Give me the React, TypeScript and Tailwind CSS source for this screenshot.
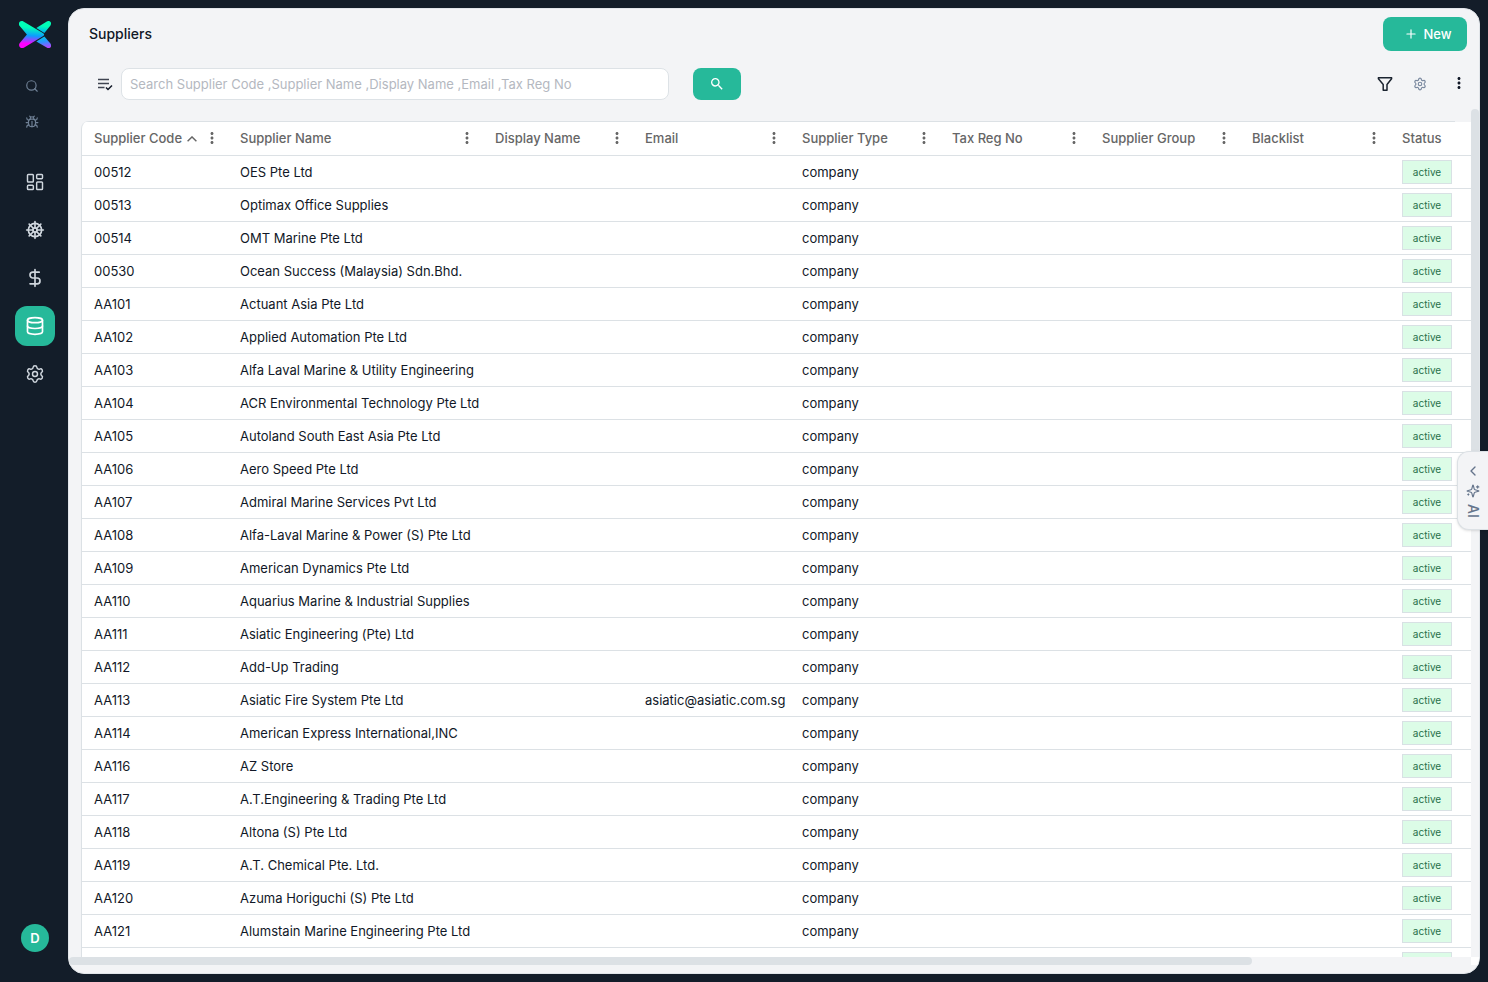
import type { ReactNode } from "react";
import {
  Bug,
  ChevronLeft,
  Database,
  DollarSign,
  LayoutDashboard,
  Plus,
  Search,
  Settings,
  ShipWheel,
} from "lucide-react";
import { MdMoreVert, MdSearch } from "react-icons/md";

const columns = [
  { label: "Supplier Code", width: "w-[146px]", sorted: true },
  { label: "Supplier Name", width: "w-[255px]" },
  { label: "Display Name", width: "w-[150px]" },
  { label: "Email", width: "w-[157px]" },
  { label: "Supplier Type", width: "w-[150px]" },
  { label: "Tax Reg No", width: "w-[150px]" },
  { label: "Supplier Group", width: "w-[150px]" },
  { label: "Blacklist", width: "w-[150px]" },
];

const suppliers: [string, string, string?][] = [
  ["00512", "OES Pte Ltd"],
  ["00513", "Optimax Office Supplies"],
  ["00514", "OMT Marine Pte Ltd"],
  ["00530", "Ocean Success (Malaysia) Sdn.Bhd."],
  ["AA101", "Actuant Asia Pte Ltd"],
  ["AA102", "Applied Automation Pte Ltd"],
  ["AA103", "Alfa Laval Marine & Utility Engineering"],
  ["AA104", "ACR Environmental Technology Pte Ltd"],
  ["AA105", "Autoland South East Asia Pte Ltd"],
  ["AA106", "Aero Speed Pte Ltd"],
  ["AA107", "Admiral Marine Services Pvt Ltd"],
  ["AA108", "Alfa-Laval Marine & Power (S) Pte Ltd"],
  ["AA109", "American Dynamics Pte Ltd"],
  ["AA110", "Aquarius Marine & Industrial Supplies"],
  ["AA111", "Asiatic Engineering (Pte) Ltd"],
  ["AA112", "Add-Up Trading"],
  ["AA113", "Asiatic Fire System Pte Ltd", "asiatic@asiatic.com.sg"],
  ["AA114", "American Express International,INC"],
  ["AA116", "AZ Store"],
  ["AA117", "A.T.Engineering & Trading Pte Ltd"],
  ["AA118", "Altona (S) Pte Ltd"],
  ["AA119", "A.T. Chemical Pte. Ltd."],
  ["AA120", "Azuma Horiguchi (S) Pte Ltd"],
  ["AA121", "Alumstain Marine Engineering Pte Ltd"],
];

function Logo() {
  return (
    <svg className="h-7 w-8" viewBox="0 0 32 28" aria-hidden="true">
      <defs>
        <linearGradient id="wing" x1="15" y1="0" x2="13" y2="27" gradientUnits="userSpaceOnUse">
          <stop offset="0.25" stopColor="#00ffb7" />
          <stop offset="0.55" stopColor="#0c9cff" />
          <stop offset="0.85" stopColor="#ff00ff" />
        </linearGradient>
        <linearGradient id="upper" x1="24" y1="0" x2="22" y2="12" gradientUnits="userSpaceOnUse">
          <stop offset="0.4" stopColor="#00ffb7" />
          <stop offset="1" stopColor="#00a8f8" />
        </linearGradient>
        <linearGradient id="lower" x1="23" y1="14" x2="26" y2="28" gradientUnits="userSpaceOnUse">
          <stop offset="0.15" stopColor="#00c4ea" />
          <stop offset="0.5" stopColor="#2e92ff" />
          <stop offset="1" stopColor="#c63cff" />
        </linearGradient>
      </defs>
      <path fill="url(#wing)" d="M4.400.5 23.800 12.100c1.800 1.100 1.800 2.100 0 3.200L4.800 26.700C1.500 28.200-1.300 24.500.8 21.900L7.900 13.600.7 5C-1.500 2.200 1.200-1.100 4.400.5Z" />
      <path fill="url(#upper)" d="M17.300 7 27.800.4c3.200-1.600 5.500 1.500 3.500 4.300l-5.900 7.400Z" />
      <path fill="url(#lower)" d="m17.300 20.400 8.100-4.900 6 6.900c2.200 2.900-.7 5.900-3.700 4.200Z" />
    </svg>
  );
}

function NavItem({ children, active }: { children: ReactNode; active?: boolean }) {
  return (
    <a
      className={
        active
          ? "flex size-10 items-center justify-center rounded-xl bg-[#26b99a] text-white"
          : "flex size-10 items-center justify-center text-[#d0d7de]"
      }
    >
      {children}
    </a>
  );
}

function Sidebar() {
  return (
    <nav className="flex h-full w-[68px] shrink-0 flex-col items-center pt-[21px] pr-px pb-[30px] pl-[3px]">
      <Logo />
      <div className="mt-[30px] mr-[6px] flex flex-col gap-[22px] text-[#6f8095]">
        <Search size={14} />
        <Bug size={14} />
      </div>
      <div className="mt-[33px] flex flex-col gap-2">
        <NavItem><LayoutDashboard size={20} strokeWidth={1.75} /></NavItem>
        <NavItem><ShipWheel size={20} strokeWidth={2} /></NavItem>
        <NavItem><DollarSign size={20} strokeWidth={2} /></NavItem>
        <NavItem active><Database size={20} strokeWidth={2} /></NavItem>
        <NavItem><Settings size={20} strokeWidth={1.75} /></NavItem>
      </div>
      <div className="mt-auto flex size-7 items-center justify-center rounded-full bg-[#26b99a] pt-px text-[13px] font-semibold text-white">
        D
      </div>
    </nav>
  );
}

function Toolbar() {
  return (
    <div className="flex h-8 shrink-0 items-center pl-7">
      <svg className="h-[14px] w-4 shrink-0" viewBox="0 0 16 14" fill="none" stroke="#3f4451" strokeWidth="1.7">
        <path d="M1 2.500h11M1 6.500h11M1 10.500h6.500" />
        <path d="m9 10.500 2 2 4-4" strokeWidth="1.500" stroke="#111827" />
      </svg>
      <div className="ml-2 flex h-8 w-[548px] items-center rounded-lg border border-[#dde2e6] bg-white px-2 pt-px text-[13px] text-[#b4b8bf]">
        Search Supplier Code ,Supplier Name ,Display Name ,Email ,Tax Reg No
      </div>
      <button className="ml-6 flex h-8 w-12 items-center justify-center rounded-lg bg-[#26b99a] text-white">
        <MdSearch size={16} />
      </button>
      <div className="ml-auto flex items-center pr-[11px]">
        <svg className="size-4" viewBox="0 0 16 16" fill="none" stroke="#1b2430" strokeWidth="1.500" strokeLinejoin="round">
          <path d="M1.400 1.800h13.200v1L10 8.500v5.700H6.200V8.500L1.400 2.800Z" />
        </svg>
        <Settings size={14} className="ml-5 text-[#7b8aa0]" />
        <MdMoreVert size={18} className="mb-[2px] ml-[23px] text-[#111827]" />
      </div>
    </div>
  );
}

function StatusTag({ label }: { label?: string }) {
  return (
    <span className="flex h-6 w-[50px] items-center justify-center border border-[#d8e1e4] bg-[#dcfce7] text-[10px] text-[#27704a]">
      {label}
    </span>
  );
}

function SupplierTable() {
  return (
    <div className="h-[836px] w-[1390px] overflow-hidden rounded-tl-lg border-l border-[#dce1e5] bg-white text-[13px]">
      <div className="h-px w-full bg-[#f3f4f6]">
        <div className="h-px w-[1373px] bg-[#dce1e5]" />
      </div>
      <div className="flex h-[34px] items-center border-b border-[#dce1e5] font-medium text-[#666666]">
        {columns.map((c) => (
          <div key={c.label} className={`${c.width} flex shrink-0 items-center pr-[7px] pl-3`}>
            <span className="pt-px whitespace-nowrap">{c.label}</span>
            {c.sorted && (
              <svg className="ml-[5px] h-[6px] w-[10px] shrink-0" viewBox="0 0 10 6" fill="none" stroke="currentColor" strokeWidth="1.400">
                <path d="M.6 5.300 5 .9l4.400 4.400" />
              </svg>
            )}
            <MdMoreVert size={18} className="mb-px ml-auto shrink-0" />
          </div>
        ))}
        <div className="pt-px pl-3">Status</div>
      </div>
      {suppliers.map(([code, name, email]) => (
        <div key={code} className="flex h-[33px] items-center border-b border-[#dce1e5] leading-5 whitespace-nowrap text-[#111827]">
          <div className="w-[146px] shrink-0 pl-3">{code}</div>
          <div className="w-[255px] shrink-0 pl-3">{name}</div>
          <div className="w-[150px] shrink-0" />
          <div className="w-[157px] shrink-0 pl-3">{email}</div>
          <div className="w-[600px] shrink-0 pl-3">company</div>
          <div className="pl-3"><StatusTag label="active" /></div>
        </div>
      ))}
      <div className="pt-1 pl-[1320px]"><StatusTag /></div>
    </div>
  );
}

export default function App() {
  return (
    <div className="relative flex h-[982px] w-[1488px] overflow-hidden bg-[#131d29] font-['Inter',sans-serif]">
      <Sidebar />
      <main className="mt-2 flex h-[966px] w-[1412px] flex-col overflow-hidden rounded-2xl border border-[#e1e5e9] bg-[#f3f4f6]">
        <header className="flex h-[50px] shrink-0 items-center justify-between pr-3 pl-5">
          <h1 className="pb-px text-[14px] font-medium text-[#111827]">Suppliers</h1>
          <button className="flex h-[34px] w-[84px] items-center justify-center gap-[5px] rounded-lg bg-[#26b99a] pl-[6px] text-[13px] font-medium text-white">
            <Plus size={14} />
            <span className="pt-px">New</span>
          </button>
        </header>
        <div className="h-[9px] shrink-0" />
        <Toolbar />
        <div className="flex h-[857px] shrink-0">
          <div className="w-[1402px] shrink-0 pt-[21px] pl-3"><SupplierTable /></div>
          <div className="w-2 shrink-0 pt-[9px]">
            <div className="h-[345px] rounded-full bg-[#dce1e5]" />
          </div>
        </div>
        <div className="flex h-2 shrink-0">
          <div className="w-[1183px] rounded-full bg-[#dce1e5]" />
          <div className="ml-auto w-2 bg-white" />
        </div>
      </main>
      <aside className="absolute top-[451px] right-0 flex h-[79px] w-[31px] flex-col items-center rounded-l-xl border border-r-0 border-[#dce1e5] bg-[#f3f4f6] pt-[11px] text-[#64748b] shadow-sm">
        <ChevronLeft size={16} />
        <svg className="mt-[5px] size-[14px]" viewBox="0 0 24 24" fill="none" stroke="currentColor" strokeWidth="2" strokeLinecap="round" strokeLinejoin="round">
          <path d="M9.937 15.500A2 2 0 0 0 8.500 14.063l-6.135-1.582a.5.5 0 0 1 0-.962L8.500 9.936A2 2 0 0 0 9.937 8.500l1.582-6.135a.5.5 0 0 1 .963 0L14.063 8.500A2 2 0 0 0 15.500 9.937l6.135 1.581a.5.5 0 0 1 0 .964L15.500 14.063a2 2 0 0 0-1.437 1.437l-1.582 6.135a.5.5 0 0 1-.963 0z" />
          <path d="M20 3v4M22 5h-4M4 17v2M5 18H3" />
        </svg>
        <span className="mt-[6px] text-[14px] leading-4 font-medium [writing-mode:vertical-rl]">AI</span>
      </aside>
    </div>
  );
}
